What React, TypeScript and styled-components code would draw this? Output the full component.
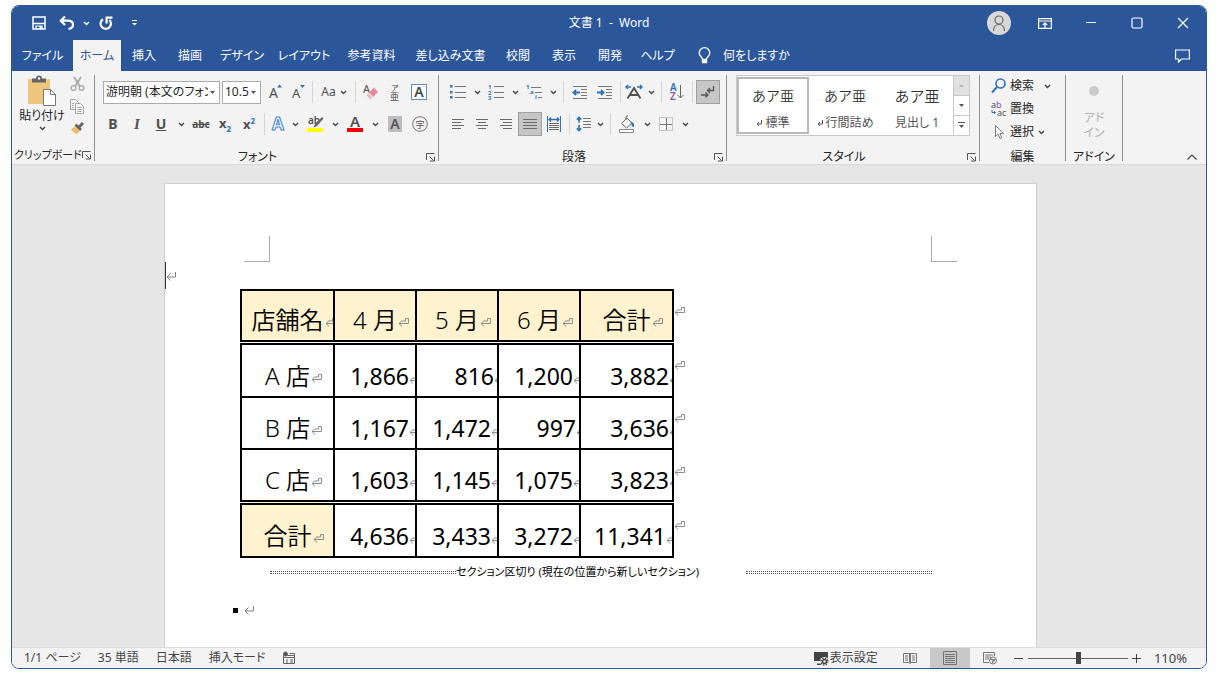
import React from "react";
import styled, { createGlobalStyle, css } from "styled-components";

const color = {
  brand: "#2b579a",
  ribbon: "#f3f3f3",
  canvas: "#e6e6e6",
  line: "#c8c8c8",
  ink: "#262626",
  icon: "#505050",
  blue: "#2e74b8",
  header: "#fff2cf",
};

const GlobalStyle = createGlobalStyle`
  *, *::before, *::after { box-sizing: border-box; }
  body {
    margin: 0;
    background: #fff;
    color: ${color.ink};
    font-family: "Noto Sans", "Noto Sans CJK JP", sans-serif;
    font-size: 12px;
    line-height: 16px;
    font-feature-settings: "palt";
  }
  button, select, input { font: inherit; font-feature-settings: inherit; color: inherit; }
  button { border: 0; background: none; padding: 0; cursor: pointer; }
  svg { display: block; flex: none; overflow: visible; }
`;

/* ---------- window frame ---------- */

const Desktop = styled.div`
  min-height: 100vh;
  padding: 5px 11px 7px;
  display: flex;
`;

const AppWindow = styled.div`
  flex: 1;
  min-width: 0;
  display: flex;
  flex-direction: column;
  border: 1px solid ${color.brand};
  border-radius: 8px;
  overflow: hidden;
`;

const TitleBar = styled.header`
  display: grid;
  grid-template-columns: 1fr auto 1fr;
  align-items: center;
  height: 34px;
  background: ${color.brand};
  color: #fff;
`;

const QuickAccess = styled.div`
  display: flex;
  align-items: center;
  padding-left: 15px;
`;

const TitleText = styled.h1`
  margin: 0;
  font-size: 12px;
  font-weight: 400;
  white-space: pre;
`;

const WindowControls = styled.div`
  display: flex;
  justify-content: flex-end;
  align-items: center;
`;

const BarButton = styled.button<{ $w: number }>`
  width: ${(p) => p.$w}px;
  height: 28px;
  display: flex;
  align-items: center;
  justify-content: center;
`;

const Avatar = styled.span`
  width: 24px;
  height: 24px;
  border-radius: 50%;
  background: #d8d8d8;
  color: #6a6a6a;
  display: flex;
  align-items: center;
  justify-content: center;
`;

/* ---------- tabs ---------- */

const TabBar = styled.nav`
  display: flex;
  height: 31px;
  padding-right: 16px;
  background: ${color.brand};
  color: #fff;
`;

const Tab = styled.button<{ $w: number; $active?: boolean }>`
  width: ${(p) => p.$w}px;
  white-space: nowrap;
  ${(p) =>
    p.$active &&
    css`
      background: ${color.ribbon};
      color: ${color.brand};
    `}
`;

const TellMe = styled.button`
  display: flex;
  align-items: center;
  gap: 12px;
  margin-left: 16px;
  white-space: nowrap;
`;

const CommentButton = styled.button`
  margin-left: auto;
`;

/* ---------- ribbon ---------- */

const Ribbon = styled.section`
  display: flex;
  height: 93px;
  padding: 4px 0 3px;
  background: ${color.ribbon};
`;

const Group = styled.div<{ $w: number; $pad?: number }>`
  width: ${(p) => p.$w}px;
  flex: none;
  display: flex;
  flex-direction: column;
  padding-left: ${(p) => p.$pad ?? 0}px;
  border-right: 1px solid #8f8f8f;
`;

const GroupBody = styled.div`
  flex: 1;
  display: flex;
  align-items: flex-start;
`;

const GroupFooter = styled.div<{ $pull?: number }>`
  display: grid;
  grid-template-columns: 1fr auto 1fr;
  align-items: center;
  height: 12px;
  margin-left: -${(p) => p.$pull ?? 0}px;
  white-space: nowrap;
`;

const ClipFooter = styled.div`
  display: flex;
  justify-content: space-between;
  align-items: center;
  height: 12px;
  font-size: 11px;
  white-space: nowrap;
`;

const GroupLabel = styled.span`
  grid-column: 2;
`;

const Launcher = styled.button`
  justify-self: end;
  padding-right: 2px;
`;

const ToolRows = styled.div`
  display: flex;
  flex-direction: column;
  gap: 8px;
  padding-top: 5px;
`;

const ToolRow = styled.div<{ $indent?: number }>`
  display: flex;
  align-items: center;
  height: 24px;
  padding-left: ${(p) => p.$indent ?? 0}px;
`;

const Tool = styled.button<{ $w?: number; $on?: boolean }>`
  width: ${(p) => p.$w ?? 24}px;
  height: 24px;
  display: flex;
  align-items: center;
  justify-content: center;
  gap: 4px;
  color: ${color.icon};
  ${(p) =>
    p.$on &&
    css`
      background: #c6c6c6;
      border: 1px solid #a0a0a0;
    `}
`;

const Divider = styled.span`
  width: 1px;
  height: 22px;
  margin: 0 3px;
  background: #d4d4d4;
`;

const Glyph = styled.span<{ $bold?: boolean; $italic?: boolean; $line?: string; $size?: number }>`
  font-size: ${(p) => p.$size ?? 14}px;
  font-weight: ${(p) => (p.$bold ? 700 : 400)};
  font-style: ${(p) => (p.$italic ? "italic" : "normal")};
  text-decoration: ${(p) => p.$line ?? "none"};
  sub, sup { font-size: 8px; line-height: 8px; color: ${color.blue}; }
`;

const SerifGlyph = styled(Glyph)`
  font-family: "Liberation Serif", serif;
`;

const Combo = styled.label<{ $w: number }>`
  width: ${(p) => p.$w}px;
  height: 23px;
  display: flex;
  align-items: center;
  gap: 2px;
  margin-right: 2px;
  padding-right: 4px;
  background: #fff;
  border: 1px solid #ababab;
`;

const ComboSelect = styled.select`
  flex: 1;
  min-width: 0;
  height: 21px;
  padding: 0 0 0 2px;
  border: 0;
  background: none;
  appearance: none;
  outline: none;
  text-overflow: clip;
`;

const PasteButton = styled.button`
  display: flex;
  flex-direction: column;
  align-items: center;
  width: 56px;
  gap: 2px;
  white-space: nowrap;
`;

const ClipTools = styled.div`
  display: flex;
  flex-direction: column;
  gap: 4px;
`;

const ClipTool = styled.button`
  width: 14px;
  height: 18px;
  display: flex;
  align-items: center;
  justify-content: center;
`;

const Gallery = styled.div`
  display: flex;
  height: 61px;
  border: 1px solid ${color.line};
  background: #fff;
`;

const StyleCard = styled.button<{ $on?: boolean }>`
  width: 72px;
  flex: none;
  display: flex;
  flex-direction: column;
  align-items: center;
  justify-content: space-between;
  margin: 1px 0;
  padding: ${(p) => (p.$on ? "8px 0 1px" : "10px 0 3px")};
  border: ${(p) => (p.$on ? "2px solid #b9b9b9" : "0")};
  white-space: nowrap;
`;

const StyleSample = styled.span<{ $size: number }>`
  font-size: ${(p) => p.$size}px;
  font-weight: 350;
  line-height: 18px;
  color: #333;
  font-feature-settings: normal;
`;

const StyleName = styled.span`
  display: flex;
  align-items: center;
  gap: 2px;
  color: #555;
`;

const GalleryScroll = styled.div`
  width: 16px;
  display: flex;
  flex-direction: column;
`;

const ScrollButton = styled.button<{ $off?: boolean }>`
  flex: 1;
  display: flex;
  align-items: center;
  justify-content: center;
  border-left: 1px solid ${color.line};
  border-bottom: 1px solid ${color.line};
  background: ${(p) => (p.$off ? "#e1e1e1" : "#fff")};
  &:last-child { border-bottom: 0; }
`;

const EditList = styled.div`
  display: flex;
  flex-direction: column;
  gap: 1px;
`;

const EditItem = styled.button<{ $far?: boolean }>`
  height: 22px;
  display: flex;
  align-items: center;
  gap: 3px;
  & > svg:last-child:not(:first-child) { margin-left: ${(p) => (p.$far ? 7 : 1)}px; }
`;

const AddinButton = styled.button`
  flex: 1;
  display: flex;
  flex-direction: column;
  align-items: center;
  gap: 14px;
  padding-top: 11px;
  color: #b4b4b4;
  line-height: 15px;
`;

const Dot = styled.span`
  width: 10px;
  height: 10px;
  border-radius: 50%;
  background: #cacaca;
`;

const CollapseButton = styled.button`
  margin: auto 8px 0 auto;
`;

/* ---------- document ---------- */

const Canvas = styled.main`
  flex: 1;
  display: flex;
  justify-content: center;
  padding: 18px 17px 0 0;
  background: ${color.canvas};
  border-top: 1px solid #d9d9d9;
`;

const Page = styled.article`
  width: 100%;
  max-width: 873px;
  background: #fff;
  border: 1px solid #cfcfcf;
  border-bottom: 0;
  padding-top: 52px;
  color: #000;
`;

const MarginMarks = styled.div`
  display: flex;
  justify-content: space-between;
  padding: 0 79px;
`;

const MarginMark = styled.span<{ $side: "left" | "right" }>`
  width: 26px;
  height: 26px;
  border-bottom: 1px solid #ababab;
  ${(p) => (p.$side === "left" ? "border-right" : "border-left")}: 1px solid #ababab;
`;

const CaretLine = styled.p`
  display: flex;
  align-items: center;
  height: 27px;
  margin: 0;
  border-left: 1px solid #333;
`;

const SalesTable = styled.table`
  margin-left: 75px;
  border-collapse: collapse;
  table-layout: fixed;
  width: 448px;
`;

const cell = css`
  padding: 0 0 2px;
  border: 2px solid #000;
  font-weight: 350;
  vertical-align: bottom;
`;

const HeadCell = styled.th<{ $fill?: boolean }>`
  ${cell}
  background: ${(p) => (p.$fill ? color.header : "#fff")};
`;

const NumberCell = styled.td`
  ${cell}
  font-weight: 400;
`;

const EndCell = styled.td`
  padding: 0 0 9px;
  border: 0;
  vertical-align: middle;
`;

const Row = styled.tr<{ $h: number; $double?: boolean }>`
  height: ${(p) => p.$h}px;
  ${(p) =>
    p.$double &&
    css`
      & > ${HeadCell}, & > ${NumberCell} { border-bottom: 5px double #000; }
    `}
`;

const CenterText = styled.div`
  display: flex;
  align-items: center;
  justify-content: center;
  overflow: hidden;
  white-space: nowrap;
  font-size: 24px;
  line-height: 36px;
  font-feature-settings: normal;
`;

const HangingMark = styled.span`
  width: 12px;
  margin-right: -12px;
  padding: 5px 0 0 1px;
`;

const NumberText = styled.div`
  display: flex;
  align-items: center;
  justify-content: flex-end;
  overflow: hidden;
  font-size: 23px;
  line-height: 36px;
`;

const ClippedMark = styled.span<{ $w: number }>`
  width: ${(p) => p.$w}px;
  padding-top: 6px;
  overflow: hidden;
`;

const SectionBreak = styled.div`
  display: flex;
  align-items: center;
  margin: 6px 104px 0 105px;
  font-size: 11px;
  white-space: nowrap;
`;

const BreakRule = styled.span`
  flex: 1;
  height: 3px;
  border-top: 1px dotted #555;
  border-bottom: 1px dotted #555;
`;

const BreakLabel = styled.span`
  flex: 0 0 290px;
`;

const LastLine = styled.p`
  display: flex;
  align-items: center;
  gap: 6px;
  height: 16px;
  margin: 22px 0 0 68px;
`;

const Bullet = styled.span`
  width: 5px;
  height: 5px;
  background: #000;
`;

/* ---------- status bar ---------- */

const StatusBar = styled.footer`
  display: flex;
  align-items: center;
  height: 21px;
  padding: 0 19px 0 12px;
  background: ${color.ribbon};
  border-top: 1px solid #dcdcdc;
  color: #444;
  white-space: nowrap;
`;

const StatusItems = styled.div`
  display: flex;
  align-items: center;
  gap: 17px;
`;

const ViewTools = styled.div`
  display: flex;
  align-items: center;
  margin-left: auto;
`;

const DisplaySettings = styled.button`
  display: flex;
  align-items: center;
  gap: 1px;
  margin-right: 12px;
`;

const ViewButton = styled.button<{ $on?: boolean }>`
  width: 40px;
  height: 20px;
  display: flex;
  align-items: center;
  justify-content: center;
  background: ${(p) => (p.$on ? "#c8c8c8" : "none")};
`;

const ZoomButton = styled.button`
  width: 18px;
  height: 20px;
  display: flex;
  align-items: center;
  justify-content: center;
`;

const ZoomSlider = styled.input`
  width: 100px;
  height: 14px;
  margin: 0;
  appearance: none;
  background: linear-gradient(#666, #666) center / 100% 1px no-repeat;
  &::-webkit-slider-thumb {
    appearance: none;
    width: 5px;
    height: 12px;
    background: #444;
  }
`;

const ZoomValue = styled.button`
  margin-left: 8px;
  font-size: 13px;
`;

/* ---------- icons ---------- */

type IconProps = { w?: number; h?: number; sw?: number; c?: string; children: React.ReactNode };
const Icon = ({ w = 16, h = 16, sw = 1, c = "currentColor", children }: IconProps) => (
  <svg width={w} height={h} viewBox={`0 0 ${w} ${h}`} fill="none" stroke={c} strokeWidth={sw} aria-hidden="true">
    {children}
  </svg>
);

const Chevron = ({ c = "#444" }: { c?: string }) => (
  <Icon w={7} h={5} sw={1.4} c={c}><path d="M1 1l2.5 2.5L6 1" /></Icon>
);

const DropTriangle = () => (
  <Icon w={5} h={3}><path d="M0 0h5L2.5 3z" fill="#555" stroke="none" /></Icon>
);

const ReturnMark = () => (
  <Icon w={11} h={9} c="#8c8c8c">
    <path d="M4.200 2.500L1 5.500l3.200 3M1 5.500h9.500V.5H7.500v2.500H4" />
  </Icon>
);

const PlainReturn = () => (
  <Icon w={11} h={10} c="#808080"><path d="M9.500 1v5H1M4.500 2.500L1 6l3.500 3.500" /></Icon>
);

const SmallReturn = () => (
  <Icon w={7} h={7} c="#555"><path d="M5.500 0v4H1M3 2L1 4l2 2" /></Icon>
);

const LauncherIcon = () => (
  <Icon w={10} h={10} c="#555"><path d="M.5 8V1.500h8M3.500 4.500l4 4M8.500 4.500v4.500H4" /></Icon>
);

const lines = (rows: [number, number][], step = 3, top = 2) =>
  rows.map(([a, b], i) => `M${a} ${top + i * step + 0.5}H${b}`).join("");

const AlignIcon = ({ rows }: { rows: [number, number][] }) => (
  <Icon w={14} h={14} c="#6a6a6a"><path d={lines(rows)} /></Icon>
);

const SaveIcon = () => (
  <Icon w={14} h={14} c="#fff" sw={1.5}>
    <path d="M1 1h12v12H1z" /><path d="M1 7.500h12" /><path d="M4 13v-3h6v3" strokeWidth="1.200" /><path d="M7.500 10h2v3h-2z" fill="#fff" stroke="none" />
  </Icon>
);
const UndoIcon = () => (
  <Icon w={16} h={14} c="#fff" sw={2.2}><path d="M6 .5L1.800 4.700 6 9M2 4.700h6.500c3.500 0 5.500 1.500 5.500 4 0 2-1.500 3.800-4.500 4.300" /></Icon>
);
const RedoIcon = () => (
  <Icon w={16} h={15} c="#fff" sw={2.2}><path d="M5 3.200A5.200 5.200 0 1011.500 4M14.500 1.600H8.600v5.900" /></Icon>
);
const CustomizeIcon = () => (
  <Icon w={7} h={8} c="#fff"><path d="M1 1.500h5" /><path d="M1 4h5L3.500 6.500z" fill="#fff" stroke="none" /></Icon>
);
const PersonIcon = () => (
  <Icon w={16} h={18} c="#666" sw={1.2}><circle cx="8" cy="6" r="4" /><path d="M2.500 17c0-4 2.500-6.500 5.500-6.500s5.500 2.500 5.500 6.500" /></Icon>
);
const RibbonDisplayIcon = () => (
  <Icon w={14} h={11} c="#fff" sw={1.2}><path d="M.6.6h12.800v9.800H.6zM.6 3h12.800M7 10V5M4.800 7L7 4.800 9.200 7" /></Icon>
);
const BulbIcon = () => (
  <Icon w={13} h={17} c="#fff" sw={1.3}>
    <path d="M4.500 12.500c0-2.500-3.300-3.200-3.300-6.500a5.300 5.300 0 0110.600 0c0 3.300-3.300 4-3.300 6.500zM4.500 12.500V15.500h4v-3M4.500 14h4" />
  </Icon>
);
const CommentIcon = () => (
  <Icon w={15} h={14} c="#fff" sw={1.2}><path d="M.6 1h13.800v9H6.500L3.500 13v-3H.6z" /></Icon>
);

const PasteIcon = () => (
  <Icon w={30} h={31}>
    <rect x="1" y="4" width="22" height="25" rx="1" fill="#edc57c" stroke="none" />
    <path d="M5 3.500h4a3 3 0 016 0h4v4H5z" fill="#666" stroke="none" />
    <circle cx="12" cy="3.500" r="1.200" fill="#f3f3f3" stroke="none" />
    <path d="M16.500 14.500h7l5 5v11h-12z" fill="#fff" stroke="#777" /><path d="M23.500 14.500v5h5" stroke="#777" />
  </Icon>
);
const CutIcon = () => (
  <Icon w={15} h={16} c="#a8a8a8" sw={1.3}>
    <path d="M4 1l6 9.500M11 1L5 10.500" strokeWidth="1.800" /><circle cx="3.500" cy="12" r="2.400" /><circle cx="11.500" cy="12" r="2.400" />
  </Icon>
);
const CopyIcon = () => (
  <Icon w={15} h={16} c="#a8a8a8">
    <path d="M.5 1.500h5l3 3v7h-8z" fill="#f3f3f3" /><path d="M5.500 5.500h5l3 3v7h-8z" fill="#f3f3f3" /><path d="M7.500 9.500h4M7.500 11.500h4M7.500 13.500h4M2 5.500h2M2 7.500h2M2 9.500h2" />
  </Icon>
);
const PainterIcon = () => (
  <Icon w={15} h={14}>
    <path d="M1 8.500L6.500 13.500l3.500-4L5 5z" fill="#edb96a" stroke="none" />
    <path d="M5.500 3.500l5.500 5.500" stroke="#666" strokeWidth="2.500" /><path d="M9 6l4-4" stroke="#666" strokeWidth="3" />
  </Icon>
);

const SizeIcon = ({ up }: { up?: boolean }) => (
  <svg width="18" height="18" viewBox="0 0 18 18" aria-hidden="true">
    <text x="3" y="15" fontSize={up ? 14 : 13} fill={color.icon}>A</text>
    <path d={up ? "M11 4.500h5l-2.500-3z" : "M11 2h5l-2.500 3z"} fill={color.blue} />
  </svg>
);
const ClearIcon = () => (
  <svg width="18" height="18" viewBox="0 0 18 18" aria-hidden="true">
    <text x="1" y="10" fontSize="11" fill={color.icon}>A</text>
    <path d="M12 4.500l4 4.500-5 5-4-4.500z" fill="#e8899a" />
    <path d="M6.300 10.200l4 4.500-2 1.500-4-4z" fill="#f3b6c0" />
  </svg>
);
const RubyIcon = () => (
  <svg width="16" height="20" viewBox="0 0 16 20" aria-hidden="true">
    <text x="4" y="9" fontSize="8" fill={color.icon}>ア</text>
    <text x="3" y="18" fontSize="9" fill={color.icon}>亜</text>
  </svg>
);
const BoxedA = () => (
  <svg width="18" height="18" viewBox="0 0 18 18" aria-hidden="true">
    <rect x="1.500" y="1.500" width="15" height="15" fill="#fff" stroke="#5b8dc9" />
    <text x="9" y="14" fontSize="14" fontWeight="600" textAnchor="middle" fill="#444">A</text>
  </svg>
);
const ShadedA = () => (
  <svg width="16" height="18" viewBox="0 0 16 18" aria-hidden="true">
    <rect x="1" y="1" width="14" height="16" fill="#bdbdbd" />
    <text x="8" y="14" fontSize="14" fontWeight="600" textAnchor="middle" fill="#555">A</text>
  </svg>
);
const CircledIcon = () => (
  <svg width="16" height="16" viewBox="0 0 16 16" aria-hidden="true">
    <circle cx="8" cy="8" r="7.300" fill="none" stroke="#777" />
    <text x="8" y="12" fontSize="9" textAnchor="middle" fill="#555">字</text>
  </svg>
);
const OutlineA = () => (
  <svg width="16" height="18" viewBox="0 0 16 18" aria-hidden="true">
    <text x="8" y="15" fontSize="17" fontWeight="700" textAnchor="middle" fill="#fff" stroke="#4a8acb" strokeWidth="1.100">A</text>
  </svg>
);
const HighlightIcon = () => (
  <svg width="18" height="18" viewBox="0 0 18 18" aria-hidden="true">
    <text x="2" y="9" fontSize="10" fontWeight="600" fill={color.icon}>ab</text>
    <path d="M17.500 3.500l-6.500 7.500-3.500 1.500 1.500-3.500 7-7z" fill="#666" />
    <rect x="1" y="13" width="16" height="4" fill="#ffff00" />
  </svg>
);
const FontColorIcon = () => (
  <svg width="18" height="18" viewBox="0 0 18 18" aria-hidden="true">
    <text x="9" y="12" fontSize="15" fontWeight="600" textAnchor="middle" fill={color.icon}>A</text>
    <rect x="1" y="13" width="16" height="4" fill="#f00000" />
  </svg>
);

const BulletsIcon = () => (
  <Icon w={16} h={16} c="#777">
    <path d="M5 2.500h11M5 8.500h11M5 13.500h11" />
    <path d="M0 1h2.500v2.500H0zM0 7h2.500v2.500H0zM0 12h2.500v2.500H0z" fill={color.blue} stroke="none" />
  </Icon>
);
const NumberingIcon = () => (
  <Icon w={16} h={16} c="#777">
    <path d="M6 2.500h10M6 8.500h10M6 13.500h10" />
    <g fill={color.blue} stroke="none" fontSize="6" fontWeight="700"><text x="0" y="5">1</text><text x="0" y="11">2</text><text x="0" y="16">3</text></g>
  </Icon>
);
const MultilevelIcon = () => (
  <Icon w={17} h={16} c="#777">
    <path d="M5 3.500h10M9 8.500h7M12 13.500h4" />
    <g fill={color.blue} stroke="none" fontSize="6" fontWeight="700"><text x="0" y="5">1</text><text x="4" y="10">a</text><text x="9" y="15">i</text></g>
  </Icon>
);
const IndentIcon = ({ out }: { out?: boolean }) => (
  <Icon w={16} h={14} c="#777">
    <path d="M1 1.500h14M9 4.500h6M9 7.500h6M9 10.500h6M1 13.500h14" />
    <path d={out ? "M8 7.500H1.500M4 5L1.500 7.500 4 10" : "M0 7.500h6.500M4 5l2.500 2.500L4 10"} stroke={color.blue} strokeWidth="1.900" />
  </Icon>
);
const CharScaleIcon = () => (
  <Icon w={18} h={16}>
    <path d="M1 3h5M3 1L1 3l2 2M17 3h-5M15 1l2 2-2 2" stroke={color.blue} strokeWidth="1.400" />
    <path d="M2.500 14.500L9 4l6.500 10.500M5 11h8" stroke="#505050" strokeWidth="1.800" />
  </Icon>
);
const SortIcon = () => (
  <svg width="16" height="18" viewBox="0 0 16 18" aria-hidden="true">
    <text x="1" y="8" fontSize="10" fontWeight="600" fill={color.blue}>A</text>
    <text x="1" y="17" fontSize="10" fontWeight="600" fill="#8a55a8">Z</text>
    <path d="M11.500 2v13M8.500 12l3 3 3-3" fill="none" stroke="#666" />
  </svg>
);
const MarksIcon = () => (
  <Icon w={16} h={16} c="#555" sw={1.3}><path d="M13.500 2v4.500H8M10 4L7.500 6.500 10 9M1 11h7M5.500 8.500L8 11l-2.500 2.500" /></Icon>
);
const DistributeIcon = () => (
  <Icon w={16} h={16} c="#6a6a6a">
    <path d="M3 7.500h10M3 9.500h10M3 11.500h10M3 13.500h10" /><path d="M1.500 0v16M14.500 0v16" stroke={color.blue} />
    <path d="M3 3.500h10M5 1.500l-2 2 2 2M11 1.500l2 2-2 2" stroke={color.blue} strokeWidth="1.300" />
  </Icon>
);
const LineSpacingIcon = () => (
  <Icon w={15} h={16} c="#777">
    <path d="M7 2.500h8M7 5.500h8M7 8.500h8M7 11.500h8" />
    <path d="M3 1.500v5M.8 3.700L3 1.500l2.200 2.200M3 9v5.500M.8 12.300L3 14.500l2.200-2.200" stroke={color.blue} strokeWidth="1.700" />
  </Icon>
);
const BucketIcon = () => (
  <Icon w={18} h={18} c="#666">
    <path d="M3.500 8.500L9 3l5 5-5.500 5zM8 5V2a1.500 1.500 0 012-1" />
    <path d="M13 7c2 .5 3 2 2.500 5-1.500-1-1.500-3-2.500-5z" fill={color.blue} stroke={color.blue} />
    <path d="M1.500 14.500h14v3h-14z" fill="#fff" stroke="#888" />
  </Icon>
);
const BordersIcon = () => (
  <Icon w={14} h={14} c="#999"><path d="M.5.5h13v13H.5z" strokeDasharray="1 1" /><path d="M7.500 1v12M1 7.500h12" stroke="#777" /></Icon>
);

const SearchIcon = () => (
  <Icon w={16} h={16} c={color.blue} sw={1.6}><circle cx="9.500" cy="5.500" r="4.500" /><path d="M6 9L1 14.500" strokeWidth="2" /></Icon>
);
const ReplaceIcon = () => (
  <svg width="16" height="18" viewBox="0 0 16 18" aria-hidden="true">
    <text x="0" y="8" fontSize="9" fill={color.icon}>a<tspan fill="#8a55a8">b</tspan></text>
    <text x="6" y="16" fontSize="9" fill={color.icon}>ac</text>
    <path d="M1 10v2.500h3.500M3 11l1.500 1.500L3 14" fill="none" stroke={color.blue} />
  </svg>
);
const PointerIcon = () => (
  <Icon w={16} h={16} c="#777"><path d="M4.500 1.500v11l2.500-2.300 2 4.300 1.800-.8-2-4.200h3.500z" fill="#fff" /></Icon>
);

const MacroIcon = () => (
  <Icon w={14} h={14} c="#666">
    <path d="M1.500 4.500h11v8h-11zM1.500 6.500h11M4 9h2M8 9h3M4 11h2M8 11h3M7.500 2.500h5v2" /><circle cx="3.500" cy="3" r="2" fill="#555" />
  </Icon>
);
const DisplayIcon = () => (
  <Icon w={16} h={15}>
    <path d="M1 1h14v9H1zM4 12.500h6V14H4z" fill="#444" stroke="none" />
    <circle cx="11.500" cy="10.500" r="4.500" fill="#f3f3f3" stroke="none" />
    <circle cx="11.500" cy="10.500" r="2" stroke="#444" strokeWidth="1.500" />
    <circle cx="11.500" cy="10.500" r="3.500" stroke="#444" strokeWidth="1.300" strokeDasharray="1.400 1.350" />
  </Icon>
);
const BookIcon = () => (
  <Icon w={14} h={12} c="#777"><path d="M.5 1.500h6v9h-6zM7.500 1.500h6v9h-6zM7 1v11M2 4h3M2 6h3M2 8h3M9 4h3M9 6h3M9 8h3" /></Icon>
);
const PrintViewIcon = () => (
  <Icon w={14} h={14} c="#6a6a6a"><path d="M.5.5h13v13H.5zM2 3.500h10M2 5.500h10M2 7.500h10M2 9.500h10M2 11.500h10" strokeWidth=".9" /></Icon>
);
const WebViewIcon = () => (
  <Icon w={14} h={14} c="#777">
    <path d="M6 11.500H.5V1.500h11V5M2 4h8M2 6h6M2 8h4" /><circle cx="10" cy="9.500" r="3.500" fill="#fff" /><path d="M7.500 8l3 1-1 3M12.500 8l-1.500 2" strokeWidth="1.400" />
  </Icon>
);

/* ---------- content ---------- */

const tabs: [string, number][] = [
  ["ファイル", 61],
  ["ホーム", 48],
  ["挿入", 46],
  ["描画", 46],
  ["デザイン", 58],
  ["レイアウト", 66],
  ["参考資料", 69],
  ["差し込み文書", 89],
  ["校閲", 46],
  ["表示", 46],
  ["開発", 46],
  ["ヘルプ", 49],
];
const headings = ["店舗名", "4 月", "5 月", "6 月", "合計"];
const sales = [
  { name: "A 店", values: ["1,866", "816", "1,200", "3,882"], h: 55 },
  { name: "B 店", values: ["1,167", "1,472", "997", "3,636"], h: 52 },
  { name: "C 店", values: ["1,603", "1,145", "1,075", "3,823"], h: 53 },
  { name: "合計", values: ["4,636", "3,433", "3,272", "11,341"], h: 55 },
];

const markWidth = (value: string, column: number) =>
  value.length === 3 || (column === 3 && value.length === 5) ? 3 : 6;

const DropTool = ({ label }: { label: string }) => (
  <Tool $w={14} aria-label={label}><Chevron /></Tool>
);

const Footer = ({ label, launcher, pull }: { label: string; launcher?: boolean; pull?: number }) => (
  <GroupFooter $pull={pull}>
    <GroupLabel>{label}</GroupLabel>
    {launcher && <Launcher aria-label={`${label}の設定`}><LauncherIcon /></Launcher>}
  </GroupFooter>
);

const ClipboardGroup = () => (
  <Group $w={83} $pad={2}>
    <GroupBody>
      <PasteButton>
        <PasteIcon />
        貼り付け
        <Chevron />
      </PasteButton>
      <ClipTools>
        <ClipTool aria-label="切り取り"><CutIcon /></ClipTool>
        <ClipTool aria-label="コピー"><CopyIcon /></ClipTool>
        <ClipTool aria-label="書式のコピー"><PainterIcon /></ClipTool>
      </ClipTools>
    </GroupBody>
    <ClipFooter>
      クリップボード
      <Launcher aria-label="クリップボードの設定"><LauncherIcon /></Launcher>
    </ClipFooter>
  </Group>
);

const FontGroup = () => (
  <Group $w={344} $pad={6}>
    <GroupBody>
      <ToolRows>
        <ToolRow $indent={2}>
          <Combo $w={117}>
            <ComboSelect aria-label="フォント" defaultValue="a">
              <option value="a">游明朝 (本文のフォント)</option>
            </ComboSelect>
            <DropTriangle />
          </Combo>
          <Combo $w={39}>
            <ComboSelect aria-label="フォント サイズ" defaultValue="a">
              <option value="a">10.5</option>
            </ComboSelect>
            <DropTriangle />
          </Combo>
          <Tool $w={24} aria-label="フォント サイズの拡大"><SizeIcon up /></Tool>
          <Tool $w={22} aria-label="フォント サイズの縮小"><SizeIcon /></Tool>
          <Divider />
          <Tool $w={36} aria-label="文字種の変換"><Glyph $size={12}>Aa</Glyph><Chevron /></Tool>
          <Divider />
          <Tool aria-label="書式のクリア"><ClearIcon /></Tool>
          <Tool aria-label="ルビ"><RubyIcon /></Tool>
          <Tool aria-label="囲み線"><BoxedA /></Tool>
        </ToolRow>
        <ToolRow>
          <Tool aria-label="太字"><Glyph $bold>B</Glyph></Tool>
          <Tool aria-label="斜体"><SerifGlyph $italic $bold $size={15}>I</SerifGlyph></Tool>
          <Tool aria-label="下線"><Glyph $bold $line="underline">U</Glyph></Tool>
          <Tool $w={16} aria-label="下線の種類"><Chevron /></Tool>
          <Tool aria-label="取り消し線"><Glyph $bold $size={10} $line="line-through">abc</Glyph></Tool>
          <Tool aria-label="下付き"><Glyph $bold $size={13}>x<sub>2</sub></Glyph></Tool>
          <Tool aria-label="上付き"><Glyph $bold $size={13}>x<sup>2</sup></Glyph></Tool>
          <Divider />
          <Tool $w={20} aria-label="文字の効果"><OutlineA /></Tool>
          <DropTool label="文字の効果の種類" />
          <Tool $w={26} aria-label="蛍光ペン"><HighlightIcon /></Tool>
          <DropTool label="蛍光ペンの色" />
          <Tool $w={26} aria-label="フォントの色"><FontColorIcon /></Tool>
          <DropTool label="フォントの色の一覧" />
          <Tool $w={26} aria-label="文字の網かけ"><ShadedA /></Tool>
          <Tool aria-label="囲い文字"><CircledIcon /></Tool>
        </ToolRow>
      </ToolRows>
    </GroupBody>
    <Footer label="フォント" launcher pull={24} />
  </Group>
);

const ParagraphGroup = () => (
  <Group $w={288} $pad={7}>
    <GroupBody>
      <ToolRows>
        <ToolRow>
          <Tool aria-label="箇条書き"><BulletsIcon /></Tool>
          <DropTool label="箇条書きの種類" />
          <Tool aria-label="段落番号"><NumberingIcon /></Tool>
          <DropTool label="段落番号の種類" />
          <Tool aria-label="アウトライン"><MultilevelIcon /></Tool>
          <DropTool label="アウトラインの種類" />
          <Divider />
          <Tool $w={26} aria-label="インデントを減らす"><IndentIcon out /></Tool>
          <Tool aria-label="インデントを増やす"><IndentIcon /></Tool>
          <Divider />
          <Tool $w={20} aria-label="拡張書式"><CharScaleIcon /></Tool>
          <DropTool label="拡張書式の種類" />
          <Divider />
          <Tool aria-label="並べ替え"><SortIcon /></Tool>
          <Divider />
          <Tool $on aria-label="編集記号の表示"><MarksIcon /></Tool>
        </ToolRow>
        <ToolRow>
          <Tool aria-label="左揃え"><AlignIcon rows={[[1, 13], [1, 10], [1, 13], [1, 10]]} /></Tool>
          <Tool aria-label="中央揃え"><AlignIcon rows={[[1, 13], [3, 11], [1, 13], [3, 11]]} /></Tool>
          <Tool aria-label="右揃え"><AlignIcon rows={[[1, 13], [4, 13], [1, 13], [4, 13]]} /></Tool>
          <Tool $on aria-label="両端揃え"><AlignIcon rows={[[0, 14], [0, 14], [0, 14], [0, 14]]} /></Tool>
          <Tool aria-label="均等割り付け"><DistributeIcon /></Tool>
          <Divider />
          <Tool $w={20} aria-label="行間"><LineSpacingIcon /></Tool>
          <DropTool label="行間の種類" />
          <Divider />
          <Tool $w={26} aria-label="塗りつぶし"><BucketIcon /></Tool>
          <DropTool label="塗りつぶしの色" />
          <Tool aria-label="罫線"><BordersIcon /></Tool>
          <DropTool label="罫線の種類" />
        </ToolRow>
      </ToolRows>
    </GroupBody>
    <Footer label="段落" launcher pull={24} />
  </Group>
);

const StylesGroup = () => (
  <Group $w={253} $pad={9}>
    <GroupBody>
      <Gallery>
        <StyleCard $on>
          <StyleSample $size={14}>あア亜</StyleSample>
          <StyleName><SmallReturn />標準</StyleName>
        </StyleCard>
        <StyleCard>
          <StyleSample $size={14}>あア亜</StyleSample>
          <StyleName><SmallReturn />行間詰め</StyleName>
        </StyleCard>
        <StyleCard>
          <StyleSample $size={15}>あア亜</StyleSample>
          <StyleName>見出し 1</StyleName>
        </StyleCard>
        <GalleryScroll>
          <ScrollButton $off aria-label="前のスタイル"><Icon w={5} h={3}><path d="M0 3h5L2.500 0z" fill="#b5b5b5" stroke="none" /></Icon></ScrollButton>
          <ScrollButton aria-label="次のスタイル"><DropTriangle /></ScrollButton>
          <ScrollButton aria-label="その他のスタイル">
            <Icon w={7} h={7} c="#555"><path d="M0 .5h7" /><path d="M1 3h5L3.500 6z" fill="#555" stroke="none" /></Icon>
          </ScrollButton>
        </GalleryScroll>
      </Gallery>
    </GroupBody>
    <Footer label="スタイル" launcher pull={27} />
  </Group>
);

const EditingGroup = () => (
  <Group $w={86} $pad={11}>
    <GroupBody>
      <EditList>
        <EditItem $far><SearchIcon />検索<Chevron /></EditItem>
        <EditItem><ReplaceIcon />置換</EditItem>
        <EditItem><PointerIcon />選択<Chevron /></EditItem>
      </EditList>
    </GroupBody>
    <Footer label="編集" pull={11} />
  </Group>
);

const AddinGroup = () => (
  <Group $w={57}>
    <GroupBody>
      <AddinButton disabled><Dot /><span>アド<br />イン</span></AddinButton>
    </GroupBody>
    <Footer label="アドイン" />
  </Group>
);

const SalesData = () => (
  <SalesTable>
    <colgroup>
      <col style={{ width: 93 }} />
      <col style={{ width: 82 }} />
      <col style={{ width: 82 }} />
      <col style={{ width: 82 }} />
      <col style={{ width: 93 }} />
      <col />
    </colgroup>
    <thead>
      <Row $h={52} $double>
        {headings.map((text) => (
          <HeadCell key={text} scope="col" $fill>
            <CenterText>{text}<HangingMark><ReturnMark /></HangingMark></CenterText>
          </HeadCell>
        ))}
        <EndCell><ReturnMark /></EndCell>
      </Row>
    </thead>
    <tbody>
      {sales.map((row, i) => (
        <Row key={row.name} $h={row.h} $double={i === 2}>
          <HeadCell scope="row" $fill={i === 3}>
            <CenterText>{row.name}<HangingMark><ReturnMark /></HangingMark></CenterText>
          </HeadCell>
          {row.values.map((value, column) => (
            <NumberCell key={column}>
              <NumberText>{value}<ClippedMark $w={markWidth(value, column)}><ReturnMark /></ClippedMark></NumberText>
            </NumberCell>
          ))}
          <EndCell><ReturnMark /></EndCell>
        </Row>
      ))}
    </tbody>
  </SalesTable>
);

export default function App() {
  return (
    <Desktop>
      <GlobalStyle />
      <AppWindow>
        <TitleBar>
          <QuickAccess>
            <BarButton $w={24} aria-label="保存"><SaveIcon /></BarButton>
            <BarButton $w={32} aria-label="元に戻す"><UndoIcon /></BarButton>
            <BarButton $w={6} aria-label="元に戻す操作の一覧"><Chevron c="#fff" /></BarButton>
            <BarButton $w={34} aria-label="繰り返し"><RedoIcon /></BarButton>
            <BarButton $w={22} aria-label="ツール バーの設定"><CustomizeIcon /></BarButton>
          </QuickAccess>
          <TitleText>文書 1  -  Word</TitleText>
          <WindowControls>
            <BarButton $w={46} aria-label="アカウント"><Avatar><PersonIcon /></Avatar></BarButton>
            <BarButton $w={46} aria-label="リボンの表示オプション"><RibbonDisplayIcon /></BarButton>
            <BarButton $w={46} aria-label="最小化"><Icon w={12} h={12} c="#fff"><path d="M1 5.500h10" /></Icon></BarButton>
            <BarButton $w={46} aria-label="最大化"><Icon w={12} h={12} c="#fff" sw={1.2}><rect x="1" y="1" width="10" height="10" rx="1.500" /></Icon></BarButton>
            <BarButton $w={46} aria-label="閉じる"><Icon w={12} h={12} c="#fff" sw={1.2}><path d="M1 1l10 10M11 1L1 11" /></Icon></BarButton>
          </WindowControls>
        </TitleBar>
        <TabBar>
          {tabs.map(([text, width], i) => (
            <Tab key={text} $w={width} $active={i === 1}>{text}</Tab>
          ))}
          <TellMe><BulbIcon />何をしますか</TellMe>
          <CommentButton aria-label="コメント"><CommentIcon /></CommentButton>
        </TabBar>
        <Ribbon>
          <ClipboardGroup />
          <FontGroup />
          <ParagraphGroup />
          <StylesGroup />
          <EditingGroup />
          <AddinGroup />
          <CollapseButton aria-label="リボンを折りたたむ">
            <Icon w={12} h={8} c="#444" sw={1.2}><path d="M1.500 6.500L6 2l4.500 4.500" /></Icon>
          </CollapseButton>
        </Ribbon>
        <Canvas>
          <Page>
            <MarginMarks><MarginMark $side="left" /><MarginMark $side="right" /></MarginMarks>
            <CaretLine><PlainReturn /></CaretLine>
            <SalesData />
            <SectionBreak>
              <BreakRule />
              <BreakLabel>セクション区切り (現在の位置から新しいセクション)</BreakLabel>
              <BreakRule />
            </SectionBreak>
            <LastLine><Bullet /><PlainReturn /></LastLine>
          </Page>
        </Canvas>
        <StatusBar>
          <StatusItems>
            <span>1/1 ページ</span>
            <span>35 単語</span>
            <span>日本語</span>
            <span>挿入モード</span>
            <MacroIcon />
          </StatusItems>
          <ViewTools>
            <DisplaySettings><DisplayIcon />表示設定</DisplaySettings>
            <ViewButton aria-label="閲覧モード"><BookIcon /></ViewButton>
            <ViewButton $on aria-label="印刷レイアウト"><PrintViewIcon /></ViewButton>
            <ViewButton aria-label="Web レイアウト"><WebViewIcon /></ViewButton>
            <ZoomButton aria-label="縮小"><Icon w={9} h={9} c="#444"><path d="M0 4.500h9" /></Icon></ZoomButton>
            <ZoomSlider type="range" min={10} max={210} defaultValue={112} aria-label="ズーム" />
            <ZoomButton aria-label="拡大"><Icon w={9} h={9} c="#444"><path d="M0 4.500h9M4.500 0v9" /></Icon></ZoomButton>
            <ZoomValue>110%</ZoomValue>
          </ViewTools>
        </StatusBar>
      </AppWindow>
    </Desktop>
  );
}
